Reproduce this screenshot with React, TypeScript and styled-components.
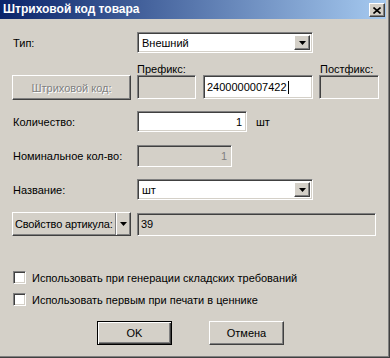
import React from 'react';
import styled, { createGlobalStyle, css } from 'styled-components';

const GlobalStyle = createGlobalStyle`
  html, body {
    margin: 0;
    padding: 0;
    background: #d4d0c8;
  }
  body {
    font-family: "Liberation Sans", Arial, sans-serif;
    font-size: 11px;
    color: #000;
  }
`;

// classic 3D borders
const sunken = css`
  box-sizing: border-box;
  border: 1px solid;
  border-color: #808080 #ffffff #ffffff #808080;
  box-shadow: inset 1px 1px 0 #404040, inset -1px -1px 0 #d4d0c8;
`;

const raised = css`
  box-sizing: border-box;
  border: 1px solid;
  border-color: #ffffff #404040 #404040 #ffffff;
  box-shadow: inset -1px -1px 0 #808080, inset 1px 1px 0 #d4d0c8;
  background: #d4d0c8;
`;

const Window = styled.div`
  width: 390px;
  height: 358px;
  box-sizing: border-box;
  border-right: 1px solid #404040;
  border-bottom: 1px solid #404040;
  box-shadow: inset -1px -1px 0 #808080;
  background: #d4d0c8;
  overflow: hidden;
`;

const TitleBar = styled.div`
  height: 19px;
  margin-right: 3px;
  background: linear-gradient(to right, #0a246a, #a6caf0);
  display: flex;
  align-items: flex-start;
  justify-content: space-between;
`;

const TitleText = styled.div`
  color: #fff;
  font-weight: bold;
  font-size: 12px;
  line-height: 19px;
  padding-left: 3px;
`;

const CloseButton = styled.div`
  ${raised}
  width: 16px;
  height: 14px;
  margin: 3px 1px 0 0;
  display: flex;
  align-items: center;
  justify-content: center;
`;

const Body = styled.div`
  padding: 13px 0 0 12px;
  display: flex;
  flex-direction: column;
`;

const Row = styled.div<{ $top: number; $h: number; $align?: string }>`
  display: flex;
  align-items: ${(p) => p.$align || 'center'};
  margin-top: ${(p) => p.$top}px;
  height: ${(p) => p.$h}px;
`;

const Label = styled.div<{ $w?: number; $indent?: number; $ml?: number }>`
  width: ${(p) => (p.$w ? `${p.$w}px` : 'auto')};
  flex-shrink: 0;
  padding-left: ${(p) => (p.$indent ?? 1)}px;
  margin-left: ${(p) => p.$ml || 0}px;
  box-sizing: border-box;
  white-space: nowrap;
`;

const Field = styled.div<{ $w: number; $h: number; $disabled?: boolean; $right?: boolean; $ml?: number }>`
  ${sunken}
  width: ${(p) => p.$w}px;
  height: ${(p) => p.$h}px;
  margin-left: ${(p) => p.$ml || 0}px;
  flex-shrink: 0;
  background: ${(p) => (p.$disabled ? '#d4d0c8' : '#ffffff')};
  color: ${(p) => (p.$disabled && p.$right ? '#808080' : '#000')};
  display: flex;
  align-items: center;
  justify-content: ${(p) => (p.$right ? 'flex-end' : 'flex-start')};
  padding: 0 4px 0 3px;
  white-space: nowrap;
`;

const Caret = styled.span`
  display: inline-block;
  width: 1px;
  height: 13px;
  background: #000;
  margin-left: 1px;
`;

const SelectBox = styled.div<{ $w: number }>`
  ${sunken}
  width: ${(p) => p.$w}px;
  height: 21px;
  background: #fff;
  display: flex;
  align-items: stretch;
  padding: 2px;
`;

const SelectText = styled.div`
  flex: 1;
  display: flex;
  align-items: center;
  padding-left: 2px;
`;

const DropButton = styled.div`
  ${raised}
  width: 16px;
  display: flex;
  align-items: center;
  justify-content: center;
`;

const PushButton = styled.div<{ $w: number; $h: number; $disabled?: boolean; $default?: boolean; $ml?: number }>`
  ${raised}
  width: ${(p) => p.$w}px;
  height: ${(p) => p.$h}px;
  margin-left: ${(p) => p.$ml || 0}px;
  flex-shrink: 0;
  display: flex;
  align-items: center;
  justify-content: center;
  white-space: nowrap;
  color: ${(p) => (p.$disabled ? '#808080' : '#000')};
  text-shadow: ${(p) => (p.$disabled ? '1px 1px 0 #ffffff' : 'none')};
  ${(p) =>
    p.$default &&
    css`
      border: 1px solid #000;
      box-shadow: inset 1px 1px 0 #ffffff, inset -1px -1px 0 #404040, inset -2px -2px 0 #808080;
    `}
`;

const SplitButton = styled.div`
  ${raised}
  width: 119px;
  height: 24px;
  display: flex;
  align-items: stretch;
  flex-shrink: 0;
`;

const SplitMain = styled.div`
  flex: 1;
  display: flex;
  align-items: center;
  padding-left: 2px;
  letter-spacing: -0.15px;
  white-space: nowrap;
  overflow: hidden;
  border-right: 1px solid #808080;
`;

const SplitArrow = styled.div`
  width: 13px;
  display: flex;
  align-items: center;
  justify-content: center;
  border-left: 1px solid #ffffff;
`;

const CheckRow = styled.label`
  display: flex;
  align-items: center;
  padding-left: 1px;
  gap: 6px;
  white-space: nowrap;
`;

const CheckBox = styled.span`
  ${sunken}
  width: 13px;
  height: 13px;
  background: #fff;
  display: inline-block;
`;

const ButtonBar = styled.div`
  display: flex;
  margin-left: 85px;
  gap: 37px;
`;

const Arrow = () => (
  <svg width="7" height="4" viewBox="0 0 7 4">
    <polygon points="0,0 7,0 3.5,4" fill="#000" />
  </svg>
);

const CloseGlyph = () => (
  <svg width="8" height="7" viewBox="0 0 8 7">
    <path d="M0.5 0.5 L7.5 6.5 M7.5 0.5 L0.5 6.5" stroke="#000" strokeWidth="1.6" />
  </svg>
);

const App = () => {
  return (
    <>
      <GlobalStyle />
      <Window>
        <TitleBar>
          <TitleText>Штриховой код товара</TitleText>
          <CloseButton>
            <CloseGlyph />
          </CloseButton>
        </TitleBar>
        <Body>
          <Row $top={0} $h={21}>
            <Label $w={125}>Тип:</Label>
            <SelectBox $w={176}>
              <SelectText>Внешний</SelectText>
              <DropButton>
                <Arrow />
              </DropButton>
            </SelectBox>
          </Row>

          <Row $top={9} $h={13}>
            <Label $w={307} $indent={125}>
              Префикс:
            </Label>
            <Label $indent={1}>Постфикс:</Label>
          </Row>

          <Row $top={0} $h={25} $align="flex-start">
            <PushButton $w={119} $h={25} $disabled>
              Штриховой код:
            </PushButton>
            <Field $w={59} $h={24} $disabled $ml={6} />
            <Field $w={110} $h={24} $ml={7}>
              2400000007422
              <Caret />
            </Field>
            <Field $w={60} $h={24} $disabled $ml={6} />
          </Row>

          <Row $top={11} $h={21}>
            <Label $w={125}>Количество:</Label>
            <Field $w={110} $h={21} $right>
              1
            </Field>
            <Label $ml={8}>шт</Label>
          </Row>

          <Row $top={13} $h={22}>
            <Label $w={125}>Номинальное кол-во:</Label>
            <Field $w={95} $h={22} $disabled $right>
              1
            </Field>
          </Row>

          <Row $top={12} $h={21}>
            <Label $w={125}>Название:</Label>
            <SelectBox $w={176}>
              <SelectText>шт</SelectText>
              <DropButton>
                <Arrow />
              </DropButton>
            </SelectBox>
          </Row>

          <Row $top={12} $h={24}>
            <SplitButton>
              <SplitMain>Свойство артикула:</SplitMain>
              <SplitArrow>
                <Arrow />
              </SplitArrow>
            </SplitButton>
            <Field $w={239} $h={23} $disabled $ml={6}>
              39
            </Field>
          </Row>

          <Row $top={35} $h={13}>
            <CheckRow>
              <CheckBox />
              Использовать при генерации складских требований
            </CheckRow>
          </Row>

          <Row $top={9} $h={13}>
            <CheckRow>
              <CheckBox />
              Использовать первым при печати в ценнике
            </CheckRow>
          </Row>

          <Row $top={15} $h={24}>
            <ButtonBar>
              <PushButton $w={75} $h={24} $default>
                OK
              </PushButton>
              <PushButton $w={75} $h={24}>
                Отмена
              </PushButton>
            </ButtonBar>
          </Row>
        </Body>
      </Window>
    </>
  );
};

export default App;
